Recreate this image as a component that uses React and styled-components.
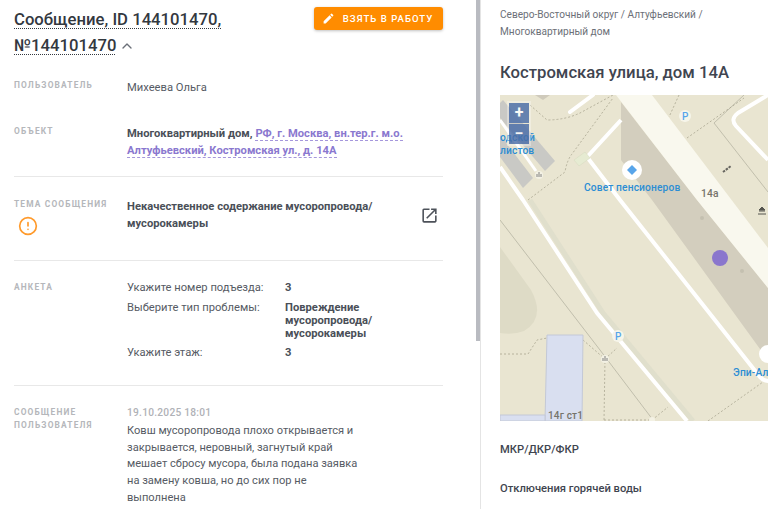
import React from 'react'
import styled, { createGlobalStyle } from 'styled-components'
import { ChevronUp, CircleAlert } from 'lucide-react'

const GlobalStyle = createGlobalStyle`
    html, body {
        margin: 0;
        padding: 0;
        height: 100%;
        background: #fff;
        overflow: hidden;
    }
    body {
        font-family: Roboto, "Liberation Sans", sans-serif;
    }
`

const Page = styled.div`
    display: flex;
    width: 768px;
    height: 509px;
    overflow: hidden;
`

const MessagePanel = styled.section`
    width: 476px;
    flex-shrink: 0;
    box-sizing: border-box;
    padding: 7px 33px 0 14px;
    overflow: hidden;
`

const ScrollTrack = styled.div`
    width: 4px;
    flex-shrink: 0;
`

const ScrollThumb = styled.div`
    width: 4px;
    height: 341px;
    background: #b9bbc1;
`

const ObjectPanel = styled.section`
    flex: 1;
    min-width: 0;
    border-left: 1px solid #e4e4e4;
    padding: 6px 0 0 19px;
    overflow: hidden;
`

const Header = styled.header`
    display: flex;
    justify-content: space-between;
    align-items: flex-start;
    height: 65px;
`

const Title = styled.h1`
    margin: 0;
    width: 270px;
    font-size: 16.7px;
    line-height: 26px;
    font-weight: 500;
    color: #33383f;
`

const DottedText = styled.span`
    text-decoration: underline dotted #33383f 1px;
    text-underline-offset: 3px;
`

const Toggle = styled(ChevronUp)`
    vertical-align: -3px;
    margin-left: 3px;
    color: #6a6f78;
`

const TakeButton = styled.button`
    display: flex;
    align-items: center;
    justify-content: center;
    gap: 8px;
    width: 129px;
    height: 23px;
    padding: 0 2px 0 0;
    border: 0;
    border-radius: 3px;
    background: #ff8c00;
    box-shadow: 0 1px 3px rgba(0, 0, 0, 0.25);
    color: #fff;
    font-family: inherit;
    font-size: 9.6px;
    font-weight: 500;
    letter-spacing: 1px;
`

const Row = styled.div`
    display: grid;
    grid-template-columns: 113px 1fr;
    padding-top: ${(p) => p.$top}px;
    padding-bottom: ${(p) => p.$bottom}px;
    border-bottom: ${(p) => (p.$divider ? '1px solid #e8e8e8' : '0')};
`

const Label = styled.div`
    font-size: 8.4px;
    line-height: 13px;
    font-weight: 700;
    letter-spacing: 1.15px;
    color: #b5b7bb;
`

const AlertIcon = styled(CircleAlert)`
    display: block;
    margin: 5px 0 0 4px;
    color: #ff9a2b;
`

const Value = styled.div`
    font-size: 11.2px;
    line-height: 17px;
    color: #565b64;
`

const Strong = styled.span`
    font-weight: 700;
    color: #4a4f58;
`

const AddressLink = styled.a`
    font-weight: 700;
    color: #8a78cf;
    border-bottom: 1px dashed #a597dc;
`

const SubjectValue = styled.div`
    display: flex;
    justify-content: space-between;
`

const SubjectText = styled(Value)`
    width: 270px;
    color: #4a4f58;
    font-weight: 700;
`

const SubjectLink = styled.svg`
    width: 19px;
    height: 19px;
    margin: 8px 4px 0 0;
    fill: #4d525a;
`

const Survey = styled.div`
    display: grid;
    grid-template-columns: 158px 105px;
    row-gap: 6.5px;
    font-size: 11.2px;
    line-height: 13px;
    color: #565b64;
`

const SurveyAnswer = styled.div`
    font-weight: 700;
    color: #4a4f58;
`

const MessageDate = styled.div`
    font-size: 10.2px;
    line-height: 13px;
    font-weight: 500;
    letter-spacing: 0.25px;
    color: #b0b2b7;
`

const MessageText = styled.div`
    width: 236px;
    margin-top: 4px;
    font-size: 11.1px;
    line-height: 16.7px;
    color: #565b64;
`

const Breadcrumbs = styled.div`
    font-size: 10.1px;
    line-height: 17px;
    color: #6c7078;
`

const ObjectTitle = styled.h2`
    margin: 22px 0 11px;
    font-size: 16.7px;
    line-height: 22px;
    font-weight: 500;
    color: #3f4550;
`

const MapBox = styled.div`
    position: relative;
    height: 326px;
    overflow: hidden;
    background: #e9e5d1;
`

const MapImage = styled.svg`
    display: block;
    width: 268px;
    height: 326px;
`

const MapLabel = styled.text`
    font-family: Roboto, "Liberation Sans", sans-serif;
    font-size: ${(p) => p.$size || 10.2}px;
    font-weight: 500;
    letter-spacing: 0.15px;
    fill: ${(p) => p.$color || '#2c8dd4'};
`

const ZoomControl = styled.div`
    position: absolute;
    top: 8px;
    left: 9px;
    display: flex;
    flex-direction: column;
    gap: 1px;
    opacity: 0.82;
    box-shadow: 0 0 0 2px rgba(255, 255, 255, 0.4);
`

const ZoomButton = styled.div`
    display: flex;
    align-items: center;
    justify-content: center;
    width: 20px;
    height: 20px;
    background: #4a6da8;
    color: #fff;
    font-size: 16px;
    font-weight: 700;
    line-height: 20px;
`

const SectionTitle = styled.div`
    font-size: 11.2px;
    line-height: 16px;
    font-weight: 500;
    color: #3f4550;
    margin-top: ${(p) => p.$top}px;
`

const survey = [
    ['Укажите номер подъезда:', '3'],
    ['Выберите тип проблемы:', 'Повреждение мусоропровода/ мусорокамеры'],
    ['Укажите этаж:', '3'],
]

function EditIcon() {
    return (
        <svg width="13" height="13" viewBox="0 0 24 24" fill="#fff">
            <path d="M3 17.25V21h3.75L17.81 9.94l-3.75-3.75L3 17.25zM20.71 7.04a1 1 0 0 0 0-1.41l-2.34-2.34a1 1 0 0 0-1.41 0l-1.83 1.83 3.75 3.75 1.83-1.83z" />
        </svg>
    )
}

function CityMap() {
    const white = { fill: 'none', stroke: '#fff', strokeWidth: 4, strokeLinejoin: 'round' }
    const dashes = { fill: 'none', stroke: '#a9a691', strokeWidth: 0.8, strokeDasharray: '2 2' }
    const line = { fill: 'none', stroke: '#bcbaa8', strokeWidth: 0.9 }

    return (
        <MapImage viewBox="500 95 268 326">
            <path d="M500 247 L531 290 Q546 318 524 331 Q514 335 500 333 Z" fill="#dedbc6" />
            <path d="M535 95 L550 95 L543 100 Z" fill="#cfcabb" />

            <path d="M621 102 L697 200 L768 288 L768 360 L652 200 L621 160 Z" fill="#d3cebe" />
            <path d="M616 95 L652 95 L768 248 L768 288 L697 200 Z" fill="#f9f8ee" />

            <path d="M500 103 L503 100 L555 161 L545 171 L500 118 Z" fill="#c9c9c5" />
            <path d="M500 135 L533 178 L523 188 L500 157 Z" fill="#c9c9c5" />
            <path d="M500 120 L536 171" {...white} strokeWidth={3} />

            <path d="M500 220 L600 350 L653 420" {...line} />
            <path d="M714 123 L768 192 M714 123 L744 95" {...line} />

            <path d="M530 105 L547 120 Q565 120 580 113 L613 95" {...dashes} />
            <path d="M528 200 L565 172 Q567 160 572 154 L613 98" {...dashes} />
            <path d="M687 138 L744 98 M679 95 L669 117" {...dashes} />
            <path d="M500 354 L528 354 L537 340 L547 338 M583 340 L605 359 L604 421 M604 420 L652 420 L668 407 M708 421 L763 382 M605 359 L617 348" {...dashes} />

            <path d="M530 200 L603 313 L693 421" fill="none" stroke="#e0dfcc" strokeWidth={5} />
            <path d="M500 167 L523 200 L597 313 L687 421" {...white} />
            <path d="M570 112 L593 95" {...white} strokeLinecap="round" />
            <path d="M621 120 L587 157 L620 200 L760 377 Q764 381 768 381" {...white} />
            <path d="M768 95 L738 113 Q730 119 736 126 L768 160" {...white} />
            <path d="M574 160 L585 152 L590 158 L579 166 Z" fill="#e6ebd2" stroke="#d8dcc2" strokeWidth={0.6} />

            <path d="M547 335 L583 335 L582 421 L545 421 Z" fill="#d9dff0" stroke="#c3c8d6" strokeWidth={1} />
            <path d="M500 415 L545 415 L545 421 L500 421 Z" fill="#d9dff0" stroke="#c3c8d6" strokeWidth={1} />

            <circle cx="632" cy="170" r="10" fill="#fff" />
            <path d="M632 165 L637 170 L632 175 L627 170 Z" fill="#58a5ea" />
            <circle cx="685" cy="116" r="6" fill="#f6f5ea" />
            <circle cx="618" cy="336" r="6" fill="#f6f5ea" />
            <circle cx="768" cy="354" r="9" fill="#fff" />
            <circle cx="605" cy="359" r="4" fill="#f3f1e4" />
            <path d="M603 361 V358 M605 361 V356 M607 361 V358" stroke="#777" strokeWidth={0.9} />
            <circle cx="539" cy="175" r="4" fill="#f3f1e4" />
            <path d="M537 177 V174 M539 177 V172 M541 177 V174" stroke="#777" strokeWidth={0.9} />
            <circle cx="652" cy="420" r="3" fill="#f3f1e4" />

            <path d="M723 172 L731 166" stroke="#66655f" strokeWidth={2} strokeDasharray="2.5 1" />
            <path d="M758 214 H766 M759 211 H765 M762 207 L759 210 H765 Z" stroke="#55544f" strokeWidth={1} fill="#55544f" />

            <circle cx="702" cy="218" r="2" fill="#c4c0b0" />
            <circle cx="742" cy="271" r="2" fill="#c4c0b0" />
            <circle cx="720" cy="258" r="8" fill="#8a76cd" />

            <MapLabel x="682" y="120" $size={10} $color="#58a5ea">P</MapLabel>
            <MapLabel x="615" y="340" $size={10} $color="#58a5ea">P</MapLabel>
            <MapLabel x="500" y="141">одской</MapLabel>
            <MapLabel x="500" y="154">листов</MapLabel>
            <MapLabel x="584" y="191">Совет пенсионеров</MapLabel>
            <MapLabel x="733" y="376">Эпи-Ал</MapLabel>
            <MapLabel x="701" y="197" $color="#75736a">14а</MapLabel>
            <MapLabel x="548" y="419" $size={10} $color="#75736a">14г ст1</MapLabel>
        </MapImage>
    )
}

export default function App() {
    return (
        <Page>
            <GlobalStyle />
            <MessagePanel>
                <Header>
                    <Title>
                        <DottedText>Сообщение, ID 144101470,</DottedText>{' '}
                        <DottedText>№144101470</DottedText>
                        <Toggle size={16} strokeWidth={2} />
                    </Title>
                    <TakeButton>
                        <EditIcon />
                        ВЗЯТЬ В РАБОТУ
                    </TakeButton>
                </Header>

                <Row $top={7} $bottom={22}>
                    <Label>ПОЛЬЗОВАТЕЛЬ</Label>
                    <Value>Михеева Ольга</Value>
                </Row>
                <Row $top={7} $bottom={17} $divider>
                    <Label>ОБЪЕКТ</Label>
                    <Value>
                        <Strong>Многоквартирный дом, </Strong>
                        <AddressLink>РФ, г. Москва, вн.тер.г. м.о.</AddressLink>{' '}
                        <AddressLink>Алтуфьевский, Костромская ул., д. 14А</AddressLink>
                    </Value>
                </Row>
                <Row $top={21} $bottom={24} $divider>
                    <div>
                        <Label>ТЕМА СООБЩЕНИЯ</Label>
                        <AlertIcon size={20} strokeWidth={2} />
                    </div>
                    <SubjectValue>
                        <SubjectText>Некачественное содержание мусоропровода/ мусорокамеры</SubjectText>
                        <SubjectLink viewBox="0 0 24 24">
                            <path d="M19 19H5V5h7V3H5a2 2 0 0 0-2 2v14a2 2 0 0 0 2 2h14c1.1 0 2-.9 2-2v-7h-2v7zM14 3v2h3.59l-9.83 9.83 1.41 1.41L19 6.41V10h2V3h-7z" />
                        </SubjectLink>
                    </SubjectValue>
                </Row>
                <Row $top={20} $bottom={26} $divider>
                    <Label>АНКЕТА</Label>
                    <Survey>
                        {survey.map(([question, answer]) => (
                            <React.Fragment key={question}>
                                <div>{question}</div>
                                <SurveyAnswer>{answer}</SurveyAnswer>
                            </React.Fragment>
                        ))}
                    </Survey>
                </Row>
                <Row $top={20} $bottom={0}>
                    <Label>СООБЩЕНИЕ ПОЛЬЗОВАТЕЛЯ</Label>
                    <div>
                        <MessageDate>19.10.2025 18:01</MessageDate>
                        <MessageText>
                            Ковш мусоропровода плохо открывается и закрывается, неровный, загнутый край мешает сбросу мусора, была подана заявка на замену ковша, но до сих пор не выполнена
                        </MessageText>
                    </div>
                </Row>
            </MessagePanel>

            <ScrollTrack>
                <ScrollThumb />
            </ScrollTrack>

            <ObjectPanel>
                <Breadcrumbs>Северо-Восточный округ / Алтуфьевский / Многоквартирный дом</Breadcrumbs>
                <ObjectTitle>Костромская улица, дом 14А</ObjectTitle>
                <MapBox>
                    <CityMap />
                    <ZoomControl>
                        <ZoomButton>+</ZoomButton>
                        <ZoomButton>−</ZoomButton>
                    </ZoomControl>
                </MapBox>
                <SectionTitle $top={21}>МКР/ДКР/ФКР</SectionTitle>
                <SectionTitle $top={23}>Отключения горячей воды</SectionTitle>
            </ObjectPanel>
        </Page>
    )
}
